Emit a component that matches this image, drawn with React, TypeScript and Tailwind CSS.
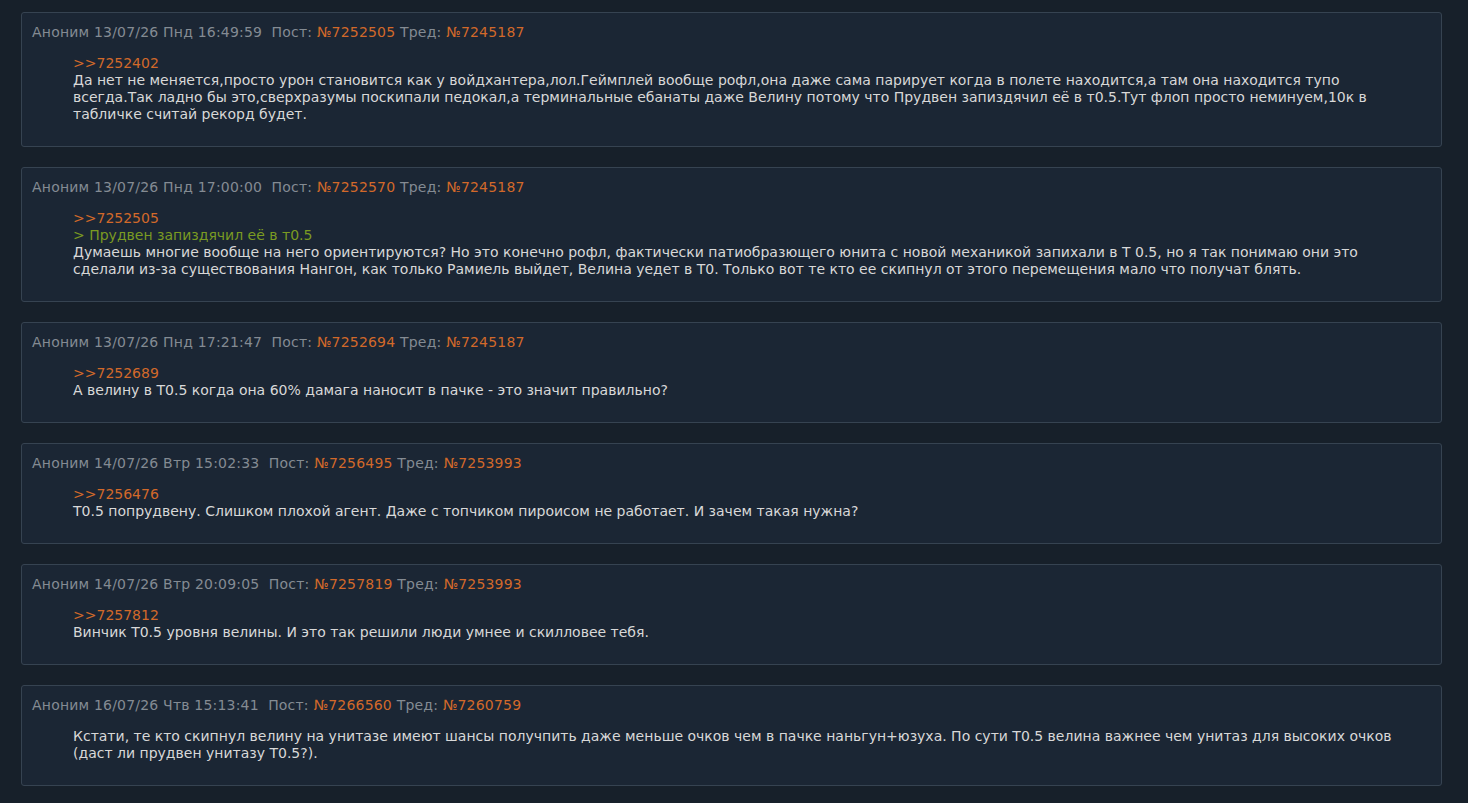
import React from 'react';

interface Post {
  date: string;
  post: string;
  thread: string;
  reply?: string;
  quote?: string;
  text: string;
}

const posts: Post[] = [
  {
    date: '13/07/26 Пнд 16:49:59',
    post: '7252505',
    thread: '7245187',
    reply: '7252402',
    text: 'Да нет не меняется,просто урон становится как у войдхантера,лол.Геймплей вообще рофл,она даже сама парирует когда в полете находится,а там она находится тупо всегда.Так ладно бы это,сверхразумы поскипали педокал,а терминальные ебанаты даже Велину потому что Прудвен запиздячил её в т0.5.Тут флоп просто неминуем,10к в табличке считай рекорд будет.',
  },
  {
    date: '13/07/26 Пнд 17:00:00',
    post: '7252570',
    thread: '7245187',
    reply: '7252505',
    quote: '> Прудвен запиздячил её в т0.5',
    text: 'Думаешь многие вообще на него ориентируются? Но это конечно рофл, фактически патиобразющего юнита с новой механикой запихали в Т 0.5, но я так понимаю они это сделали из-за существования Нангон, как только Рамиель выйдет, Велина уедет в Т0. Только вот те кто ее скипнул от этого перемещения мало что получат блять.',
  },
  {
    date: '13/07/26 Пнд 17:21:47',
    post: '7252694',
    thread: '7245187',
    reply: '7252689',
    text: 'А велину в Т0.5 когда она 60% дамага наносит в пачке - это значит правильно?',
  },
  {
    date: '14/07/26 Втр 15:02:33',
    post: '7256495',
    thread: '7253993',
    reply: '7256476',
    text: 'Т0.5 попрудвену. Слишком плохой агент. Даже с топчиком пироисом не работает. И зачем такая нужна?',
  },
  {
    date: '14/07/26 Втр 20:09:05',
    post: '7257819',
    thread: '7253993',
    reply: '7257812',
    text: 'Винчик Т0.5 уровня велины. И это так решили люди умнее и скилловее тебя.',
  },
  {
    date: '16/07/26 Чтв 15:13:41',
    post: '7266560',
    thread: '7260759',
    text: 'Кстати, те кто скипнул велину на унитазе имеют шансы получпить даже меньше очков чем в пачке наньгун+юзуха. По сути Т0.5 велина важнее чем унитаз для высоких очков (даст ли прудвен унитазу Т0.5?).',
  },
];

const PostCard: React.FC<{ p: Post }> = ({ p }) => (
  <div className="bg-[#1b2634] border border-[#364351] rounded-[3px] pt-[11px] pb-[23px] px-[10px]">
    <div className="text-[#848b93] text-[14px] leading-[17px] tracking-[0.2px] whitespace-pre">
      Аноним {p.date}  Пост: <span className="text-[#d2692a]">№{p.post}</span> Тред:{' '}
      <span className="text-[#d2692a]">№{p.thread}</span>
    </div>
    <div className="mt-[14px] ml-[41px] mr-[30px] text-[14px] leading-[17px] text-[#d8d8d8]">
      {p.reply && <div className="text-[#d2692a]">&gt;&gt;{p.reply}</div>}
      {p.quote && <div className="text-[#7a9a22]">{p.quote}</div>}
      <div>{p.text}</div>
    </div>
  </div>
);

export default function App() {
  return (
    <div
      className="min-h-screen bg-[#17202a] pl-[21px] pr-[26px] pt-[12px] pb-[20px] flex flex-col gap-[20px]"
      style={{ fontFamily: '"DejaVu Sans", Verdana, sans-serif' }}
    >
      {posts.map((p) => (
        <PostCard key={p.post} p={p} />
      ))}
    </div>
  );
}
